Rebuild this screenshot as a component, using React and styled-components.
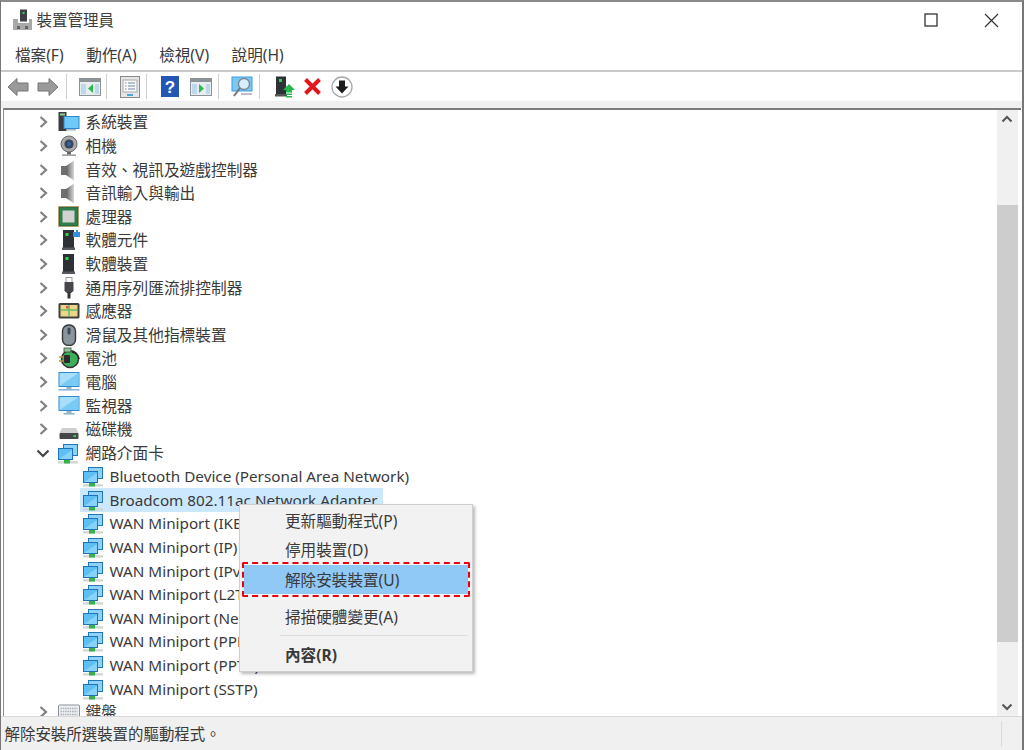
import React from 'react';
import styled, { createGlobalStyle } from 'styled-components';

const Global = createGlobalStyle`
  html, body { margin: 0; padding: 0; background: #fff; overflow: hidden; }
  body { font-family: "Noto Sans", "Noto Sans CJK TC", sans-serif; }
`;

const Window = styled.div`
  position: relative; width: 1024px; height: 750px; box-sizing: border-box;
  display: flex; flex-direction: column; overflow: hidden; background: #fff;
  border-top: 2px solid #8a8a8a; border-left: 1.5px solid #777; border-right: 2px solid #777; color: #3a3a3a;
`;
const TitleBar = styled.div`
  height: 37px; box-sizing: border-box; display: flex; align-items: center; padding: 0 0 1px 10.5px; flex: none;
`;
const TitleText = styled.span`
  font-size: 15.5px; margin-left: 3px; line-height: 20px; color: #3c3c3c;
`;
const WinButtons = styled.div`
  margin-left: auto; display: flex; align-items: center; gap: 46px; padding-right: 23px;
`;
const MenuBar = styled.div`
  height: 31px; flex: none; display: flex; align-items: center; gap: 22.5px; padding-left: 14px;
  border-bottom: 2px solid #c9c9c9; font-size: 15.6px; color: #3a3a3a;
`;
const ToolBar = styled.div`
  height: 29px; flex: none; display: flex; align-items: center; padding-left: 1.5px;
`;
const ToolButton = styled.div`
  width: 30px; height: 26px; display: flex; align-items: center; justify-content: center; flex: none;
  margin-left: ${p => p.$ml || 0}px;
`;
const ToolSep = styled.div`
  width: 1px; height: 25px; background: #d0d0d0; flex: none;
  margin-left: ${p => p.$l}px; margin-right: ${p => p.$r}px;
`;
const Band = styled.div`
  height: 7px; flex: none; background: #f0f0f0;
`;
const Middle = styled.div`
  flex: 1; min-height: 0; display: flex; margin-left: 1.5px; margin-right: 1.5px;
  border-top: 2px solid #7c7c7c; border-left: 1px solid #8c8c8c;
`;
const Tree = styled.div`
  flex: 1; min-width: 0; overflow: hidden; background: #fff; padding-top: 0.6px;
`;
const Row = styled.div`
  height: 23.6px; display: flex; align-items: center; white-space: nowrap;
  padding-left: ${p => (p.$child ? 79 : 32)}px; box-sizing: border-box;
`;
const Chevron = styled.svg`
  width: 14px; height: 14px; flex: none; margin-right: 8px;
`;
const IconBox = styled.span`
  width: 22px; height: 22px; flex: none; display: inline-flex; margin-right: ${p => (p.$child ? 5 : 6)}px;
`;
const Selected = styled.div`
  display: flex; align-items: center; height: 23.6px; background: #cce8ff;
  margin-left: -3px; padding: 0 5px 0 3px;
`;
const Label = styled.span`
  font-size: 15.7px; color: #3a3a3a; line-height: 20px;
`;
const LatinLabel = styled.span`
  font-size: 15.25px; color: #3a3a3a; line-height: 20px;
`;
const Scrollbar = styled.div`
  width: 21px; flex: none; background: #f0f0f0; display: flex; flex-direction: column; align-items: stretch;
  margin-right: 3px;
`;
const ScrollArrow = styled.div`
  height: 18px; flex: none; display: flex; align-items: center; justify-content: center;
`;
const ScrollThumb = styled.div`
  height: 437px; flex: none; background: #cdcdcd;
`;
const ScrollFill = styled.div`
  flex: ${p => (p.$h ? 'none' : 1)};
  height: ${p => (p.$h ? `${p.$h}px` : 'auto')};
`;
const StatusBar = styled.div`
  height: 33px; flex: none; background: #f0f0f0; border-top: 1px solid #d8d8d8;
  display: flex; align-items: center; padding-left: 3.5px; font-size: 15.45px; color: #3a3a3a;
`;
const StatusGrip = styled.div`
  margin-left: auto; width: 1px; height: 26px; background: #dcdcdc; margin-right: 20px;
`;
const ContextMenu = styled.div`
  position: absolute; left: 237.5px; top: 502px; width: 234.5px; height: 168px; box-sizing: border-box;
  background: #f2f2f2; border: 1px solid #cfcfcf; box-shadow: 2px 2px 3px rgba(0,0,0,.28);
  padding: 0.5px 4px 0 4px; display: flex; flex-direction: column;
`;
const MenuItem = styled.div`
  position: relative; height: 29.5px; flex: none; display: flex; align-items: center; padding-left: 41.5px;
  font-size: 15.6px; color: #3a3a3a; margin-top: ${p => p.$mt || 0}px;
  font-weight: ${p => (p.$bold ? 700 : 400)};
  background: ${p => (p.$active ? '#90c8f6' : 'transparent')};
`;
const RedOutline = styled.div`
  position: absolute; inset: -2.5px -2px; border: 2.5px dashed #e8000d; border-radius: 2px; pointer-events: none;
`;
const MenuSep = styled.div`
  height: 1px; background: #dedede; margin: 3px 0 4.5px 36px; flex: none;
`;

const Net = () => (
  <svg width="22" height="22" viewBox="0 0 22 22">
    <rect x="5" y="2" width="15" height="12" fill="#1f78bd" />
    <rect x="6" y="3" width="13" height="10" fill="#8fd2f7" />
    <rect x="0" y="6" width="15" height="12" fill="#1f74b8" />
    <rect x="1" y="7" width="13" height="10" fill="#5ebff3" />
    <path d="M1 17 L14 8 V17Z" fill="#86d2f8" />
    <path d="M0 19.3h20v2.2H0z" fill="#cfd5d0" />
    <path d="M6 18h6v3.5H6z" fill="#36b24a" />
  </svg>
);
const Monitor = ({ base }) => (
  <svg width="22" height="22" viewBox="0 0 22 22">
    <rect x="0.5" y="1" width="21" height="15" fill="#2f8bcb" />
    <rect x="1.5" y="2" width="19" height="13" fill="#a6dffb" />
    <path d="M1.5 15 L20.5 2 V15Z" fill="#79caf6" />
    <rect x="8.5" y="16" width="5" height="2" fill="#9bb4c4" />
    <rect x={base ? 0.5 : 5.5} y="18" width={base ? 21 : 11} height="1.6" fill="#8fb7d2" />
  </svg>
);
const Speaker = () => (
  <svg width="22" height="22" viewBox="0 0 22 22">
    <defs><linearGradient id="spk" x1="0" x2="1"><stop offset="0" stopColor="#5f5f5f" /><stop offset="1" stopColor="#d8d8d8" /></linearGradient></defs>
    <rect x="3" y="7" width="5" height="9" fill="#6f6f6f" />
    <path d="M8 7 L16 1.5 V21.5 L8 16Z" fill="url(#spk)" />
  </svg>
);
const Tower = ({ children }) => (
  <svg width="22" height="22" viewBox="0 0 22 22">
    <rect x="5" y="1" width="11" height="18" fill="#2e3136" />
    <rect x="7.5" y="4" width="3" height="3" fill="#2fd24a" />
    <rect x="4" y="18.5" width="13" height="2.5" fill="#55585c" />
    {children}
  </svg>
);
const icons = {
  system: (
    <svg width="22" height="22" viewBox="0 0 22 22">
      <rect x="0.5" y="1" width="8" height="19" fill="#3a3c40" />
      <rect x="2" y="2.5" width="5" height="2" fill="#8fd18a" />
      <rect x="5.5" y="5" width="16" height="13" fill="#2f86c8" />
      <rect x="6.5" y="6" width="14" height="11" fill="#6dc9f7" />
      <rect x="9" y="18" width="9" height="1.5" fill="#9db8c8" />
    </svg>
  ),
  camera: (
    <svg width="22" height="22" viewBox="0 0 22 22">
      <circle cx="11" cy="9" r="8" fill="#a7a9ab" stroke="#6a6a6a" />
      <circle cx="11" cy="9" r="4.6" fill="#3c4656" />
      <circle cx="11" cy="9" r="2" fill="#3565b0" />
      <rect x="9" y="17" width="4" height="2.5" fill="#666" />
      <rect x="4" y="19.5" width="14" height="1.3" fill="#888" />
    </svg>
  ),
  speaker: <Speaker />,
  cpu: (
    <svg width="22" height="22" viewBox="0 0 22 22">
      <rect x="0.5" y="0.5" width="20" height="20" fill="#2d6b42" stroke="#c98a3c" strokeDasharray="1 1" />
      <rect x="2" y="2" width="17" height="17" fill="#2f7d4a" />
      <rect x="4.5" y="4.5" width="12" height="12" fill="#d2d2d2" />
    </svg>
  ),
  softcomp: (
    <Tower>
      <path d="M15 3h3V1h2v2h2v5h-7z" fill="#2f8fe0" />
    </Tower>
  ),
  softdev: <Tower />,
  usb: (
    <svg width="22" height="22" viewBox="0 0 22 22">
      <rect x="8" y="0.5" width="6" height="5" fill="none" stroke="#999" />
      <path d="M6.5 5h9v9l-2.5 2h-4l-2.5-2z" fill="#45474a" />
      <rect x="9.5" y="15" width="3" height="6.5" fill="#333" />
    </svg>
  ),
  sensor: (
    <svg width="22" height="22" viewBox="0 0 22 22">
      <rect x="0.5" y="3" width="21" height="15.5" rx="1.5" fill="#3f3f3f" />
      <rect x="2.5" y="5" width="17" height="11.5" fill="#ecd48a" />
      <path d="M2.5 10h17M11 5v11.5" stroke="#5fbf6a" strokeWidth="1.5" />
      <rect x="8" y="6" width="2.5" height="2.5" fill="#d85a4a" />
    </svg>
  ),
  mouse: (
    <svg width="22" height="22" viewBox="0 0 22 22">
      <rect x="4.5" y="1" width="13" height="20.5" rx="6" fill="#8a949c" stroke="#34383c" strokeWidth="1.4" />
      <rect x="9.5" y="3.5" width="3" height="7" rx="1.5" fill="#3f4a56" />
    </svg>
  ),
  battery: (
    <svg width="22" height="22" viewBox="0 0 22 22">
      <circle cx="12" cy="12" r="8.5" fill="#3fae5a" stroke="#333" strokeWidth="1.5" />
      <rect x="6" y="1" width="7" height="4" fill="#8cc890" stroke="#444" strokeWidth=".8" />
      <path d="M1 10h6M1 14h6" stroke="#b8923a" strokeWidth="1.5" />
      <rect x="6" y="8" width="6" height="8" rx="1" fill="#2b2b2b" />
      <path d="M14 5a8 8 0 0 1 7 7" stroke="#222" strokeWidth="1.6" fill="none" />
    </svg>
  ),
  computer: <Monitor base />,
  monitor: <Monitor />,
  disk: (
    <svg width="22" height="22" viewBox="0 0 22 22">
      <path d="M4 10h14l2.5 5H1.5z" fill="#d0d0d0" />
      <rect x="1.5" y="15" width="19" height="6" rx="1" fill="#45474a" />
      <rect x="15.5" y="17" width="2.5" height="2" fill="#35d050" />
    </svg>
  ),
  net: <Net />,
  keyboard: (
    <svg width="22" height="22" viewBox="0 0 22 22">
      <rect x="0.5" y="4" width="21" height="14" rx="1" fill="#eef0f2" stroke="#8b9198" />
      <path d="M2.5 7.5h17M2.5 10.5h17M2.5 13.5h17" stroke="#a8b0b8" strokeWidth="1.4" strokeDasharray="1.5 .8" />
      <path d="M6 16h10" stroke="#a8b0b8" strokeWidth="1.2" />
    </svg>
  ),
};

const groups = [
  ['system', '系統裝置'], ['camera', '相機'], ['speaker', '音效、視訊及遊戲控制器'], ['speaker', '音訊輸入與輸出'],
  ['cpu', '處理器'], ['softcomp', '軟體元件'], ['softdev', '軟體裝置'], ['usb', '通用序列匯流排控制器'],
  ['sensor', '感應器'], ['mouse', '滑鼠及其他指標裝置'], ['battery', '電池'], ['computer', '電腦'],
  ['monitor', '監視器'], ['disk', '磁碟機'],
];
const adapters = [
  'Bluetooth Device (Personal Area Network)', 'Broadcom 802.11ac Network Adapter',
  'WAN Miniport (IKEv2)', 'WAN Miniport (IP)', 'WAN Miniport (IPv6)', 'WAN Miniport (L2TP)',
  'WAN Miniport (Network Monitor)', 'WAN Miniport (PPPOE)', 'WAN Miniport (PPTP)', 'WAN Miniport (SSTP)',
];

const Closed = () => (
  <Chevron viewBox="0 0 14 14"><path d="M4.5 2 L10 7 L4.5 12" fill="none" stroke="#808080" strokeWidth="2.2" /></Chevron>
);
const Open = () => (
  <Chevron viewBox="0 0 14 14"><path d="M1.5 4.5 L7 10 L12.5 4.5" fill="none" stroke="#444" strokeWidth="2.2" /></Chevron>
);

const Arrow = ({ flip }) => (
  <svg width="22" height="20" viewBox="0 0 22 20" style={flip ? { transform: 'scaleX(-1)' } : undefined}>
    <path d="M1 10 L10 1.5 V6 H21 V14 H10 V18.5Z" fill="#9a9a9a" stroke="#757575" strokeWidth="1" />
  </svg>
);
const Panel = ({ side }) => (
  <svg width="22" height="18" viewBox="0 0 22 18">
    <rect x="0.5" y="0.5" width="21" height="17" fill="#e8eef0" stroke="#8c9298" />
    <rect x="1" y="1" width="20" height="3" fill="#8c9298" />
    <rect x="2" y="6" width="5" height="10" fill="#bcd8ea" />
    <rect x="16" y="6" width="4" height="10" fill="#bcd8ea" />
    {side === 'l'
      ? <path d="M14 6 V15 L9 10.5Z" fill="#2fb84f" />
      : <path d="M9 6 V15 L14 10.5Z" fill="#2fb84f" />}
  </svg>
);

export default function App() {
  return (
    <>
      <Global />
      <Window>
        <TitleBar>
          <svg width="22" height="22" viewBox="0 0 22 22">
            <rect x="8" y="0.5" width="7" height="12" fill="#3c3f44" />
            <rect x="10.5" y="3" width="2" height="2" fill="#2fd24a" />
            <path d="M1 10h5v4h11v-4h3v11H1z" fill="#a8a8a8" />
            <rect x="5" y="17" width="3" height="3" fill="#666" />
            <rect x="13" y="17" width="3" height="3" fill="#666" />
          </svg>
          <TitleText>裝置管理員</TitleText>
          <WinButtons>
            <svg width="14" height="14" viewBox="0 0 14 14"><rect x="1" y="1" width="12" height="12" fill="none" stroke="#333" strokeWidth="1.3" /></svg>
            <svg width="15" height="15" viewBox="0 0 15 15"><path d="M1 1L14 14M14 1L1 14" stroke="#333" strokeWidth="1.2" /></svg>
          </WinButtons>
        </TitleBar>
        <MenuBar>
          <span>檔案(F)</span><span>動作(A)</span><span>檢視(V)</span><span>說明(H)</span>
        </MenuBar>
        <ToolBar>
          <ToolButton><Arrow /></ToolButton>
          <ToolButton><Arrow flip /></ToolButton>
          <ToolSep $l={3} $r={8} />
          <ToolButton><Panel side="l" /></ToolButton>
          <ToolSep $l={1} $r={8} />
          <ToolButton>
            <svg width="20" height="22" viewBox="0 0 20 22">
              <rect x="0.5" y="0.5" width="19" height="21" fill="#e4e6e8" stroke="#8a8a8a" />
              <rect x="3" y="4" width="14" height="12" fill="#fafafa" stroke="#aaa" />
              <path d="M5 7h1.5M8 7h7M5 10h1.5M8 10h7M5 13h1.5M8 13h7" stroke="#6a8aa8" />
              <rect x="7" y="18" width="6" height="2" fill="#4aa8e0" />
            </svg>
          </ToolButton>
          <ToolSep $l={1.5} $r={7.5} />
          <ToolButton>
            <svg width="18" height="21" viewBox="0 0 18 21">
              <rect width="18" height="21" fill="#2456b4" />
              <text x="9" y="17" textAnchor="middle" fontSize="17" fontWeight="700" fontFamily="Liberation Sans" fill="#fff">?</text>
            </svg>
          </ToolButton>
          <ToolButton $ml={1}><Panel side="r" /></ToolButton>
          <ToolSep $l={2} $r={8} />
          <ToolButton>
            <svg width="22" height="22" viewBox="0 0 22 22">
              <rect x="0.5" y="0.5" width="21" height="15" fill="#3f9ee0" />
              <rect x="1.5" y="1.5" width="19" height="13" fill="#7cc6f2" />
              <circle cx="13" cy="8" r="5.5" fill="#d8eef8" stroke="#7a8a96" strokeWidth="1.4" />
              <path d="M9 12L3 20" stroke="#777" strokeWidth="2" />
              <path d="M10 18h11" stroke="#aab" strokeWidth="1.5" />
            </svg>
          </ToolButton>
          <ToolSep $l={2} $r={10} />
          <ToolButton>
            <svg width="20" height="22" viewBox="0 0 20 22">
              <rect x="1" y="0.5" width="10" height="18" fill="#2e3136" />
              <rect x="4" y="3" width="3" height="3" fill="#2fd24a" />
              <rect x="0" y="18" width="12" height="2.5" fill="#555" />
              <path d="M14 8 L20 14 H8Z" fill="#22b84a" />
              <rect x="11" y="14" width="6" height="2.5" fill="#22b84a" />
              <rect x="11" y="17.5" width="6" height="1.5" fill="#22b84a" />
              <rect x="11" y="20" width="6" height="1.5" fill="#22b84a" />
            </svg>
          </ToolButton>
          <ToolButton $ml={-2}>
            <svg width="19" height="19" viewBox="0 0 19 19"><path d="M2.5 2.5L16.5 16.5M16.5 2.5L2.5 16.5" stroke="#e2141c" strokeWidth="4" /></svg>
          </ToolButton>
          <ToolButton $ml={-0.5}>
            <svg width="22" height="22" viewBox="0 0 22 22">
              <circle cx="11" cy="11" r="10" fill="#fff" stroke="#a8a8a8" strokeWidth="1.3" />
              <path d="M8 4.5h6v6h3.5L11 17.5 4.5 10.5H8z" fill="#1c1c1c" />
            </svg>
          </ToolButton>
        </ToolBar>
        <Band />
        <Middle>
          <Tree>
            {groups.map(([ic, t], i) => (
              <Row key={i}>
                <Closed />
                <IconBox>{icons[ic]}</IconBox>
                <Label>{t}</Label>
              </Row>
            ))}
            <Row>
              <Open />
              <IconBox>{icons.net}</IconBox>
              <Label>網路介面卡</Label>
            </Row>
            {adapters.map((t, i) => (
              <Row key={t} $child>
                {i === 1 ? (
                  <Selected>
                    <IconBox $child>{icons.net}</IconBox>
                    <LatinLabel>{t}</LatinLabel>
                  </Selected>
                ) : (
                  <>
                    <IconBox $child>{icons.net}</IconBox>
                    <LatinLabel>{t}</LatinLabel>
                  </>
                )}
              </Row>
            ))}
            <Row>
              <Closed />
              <IconBox>{icons.keyboard}</IconBox>
              <Label>鍵盤</Label>
            </Row>
          </Tree>
          <Scrollbar>
            <ScrollArrow>
              <svg width="12" height="8" viewBox="0 0 12 8"><path d="M1.5 6.5L6 2l4.5 4.5" fill="none" stroke="#555" strokeWidth="2" /></svg>
            </ScrollArrow>
            <ScrollFill $h={77} />
            <ScrollThumb />
            <ScrollFill />
            <ScrollArrow>
              <svg width="12" height="8" viewBox="0 0 12 8"><path d="M1.5 1.5L6 6l4.5-4.5" fill="none" stroke="#555" strokeWidth="2" /></svg>
            </ScrollArrow>
          </Scrollbar>
        </Middle>
        <StatusBar>
          <span>解除安裝所選裝置的驅動程式。</span>
          <StatusGrip />
        </StatusBar>
        <ContextMenu>
          <MenuItem>更新驅動程式(P)</MenuItem>
          <MenuItem>停用裝置(D)</MenuItem>
          <MenuItem $active>解除安裝裝置(U)<RedOutline /></MenuItem>
          <MenuItem $mt={8}>掃描硬體變更(A)</MenuItem>
          <MenuSep />
          <MenuItem $bold>內容(R)</MenuItem>
        </ContextMenu>
      </Window>
    </>
  );
}
